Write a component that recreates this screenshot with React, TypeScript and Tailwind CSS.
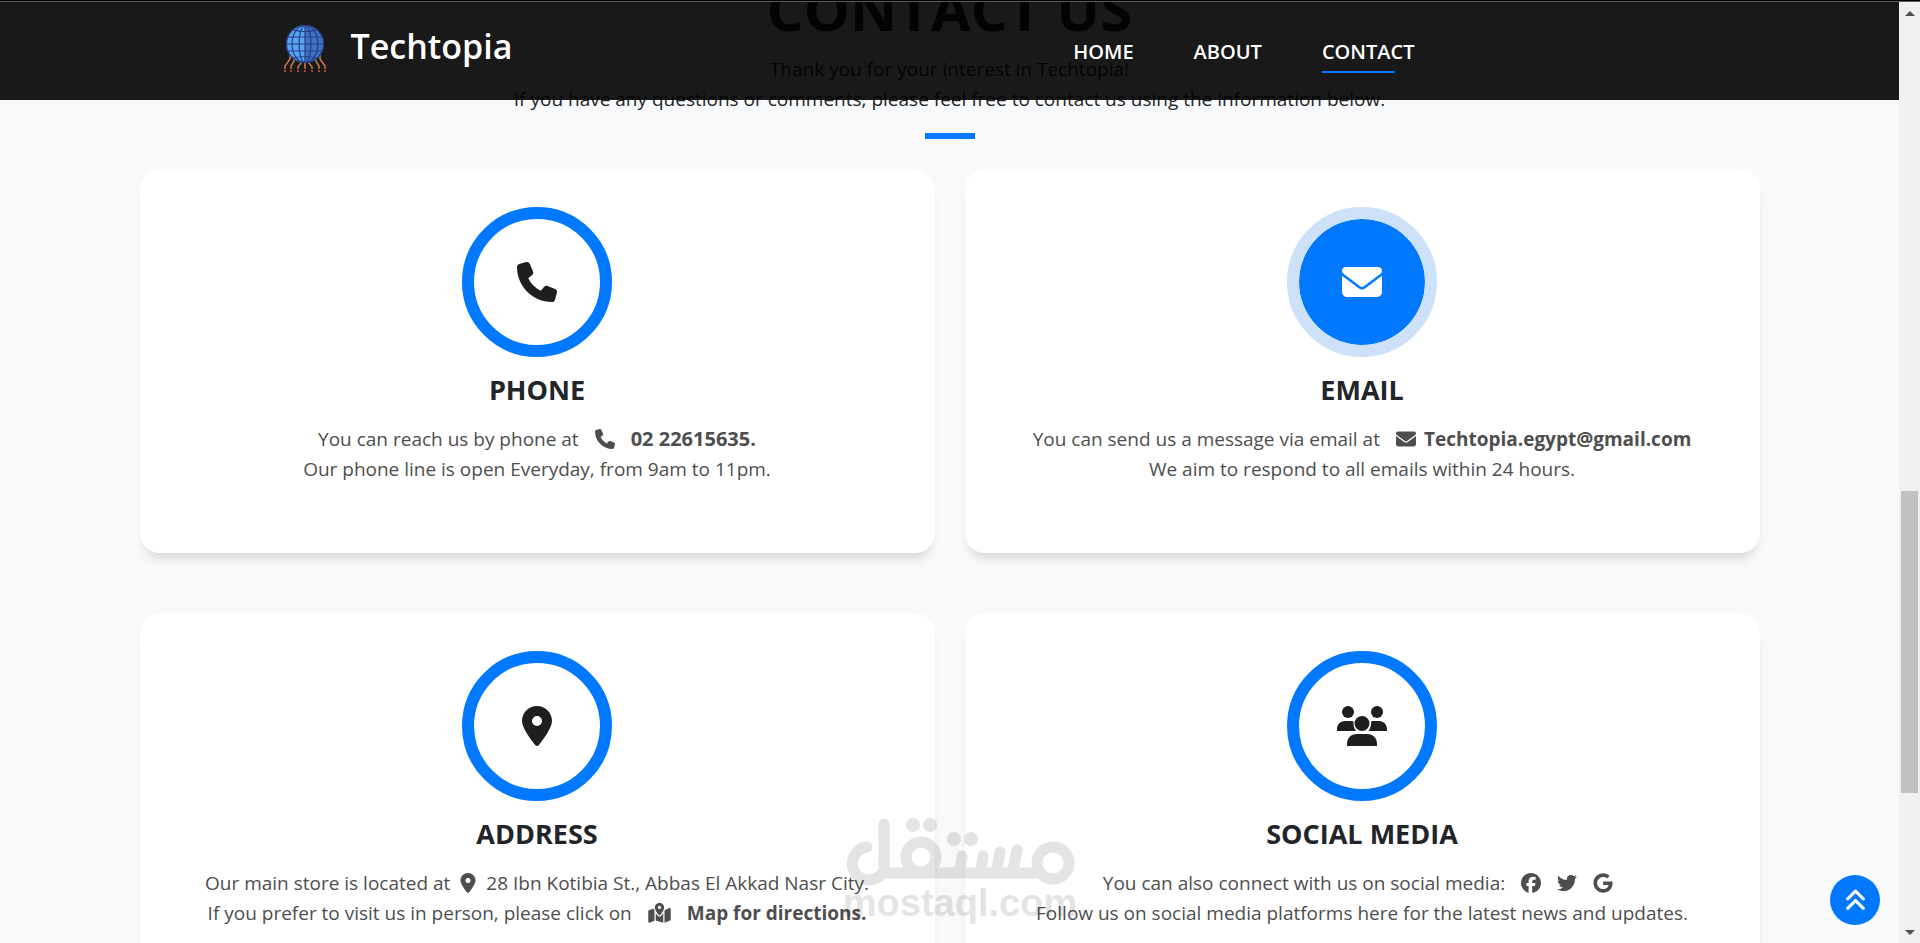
import type { ReactNode } from 'react'
import {
  FaPhone,
  FaEnvelope,
  FaLocationDot,
  FaMapLocationDot,
  FaFacebook,
  FaTwitter,
  FaGoogle,
  FaAnglesUp
} from 'react-icons/fa6'

interface ContactCard {
  title: string
  icon: ReactNode
  active?: boolean
  lines: ReactNode[]
}

const navLinks = [
  { label: 'HOME', href: '#home' },
  { label: 'ABOUT', href: '#about' },
  { label: 'CONTACT', href: '#contact', active: true }
]

const UsersIcon = () => (
  <svg viewBox="0 0 50 40" className="w-[50px] h-[40px]" fill="currentColor">
    <circle cx="11" cy="6" r="6" />
    <circle cx="40" cy="6" r="6" />
    <circle cx="25" cy="17.500" r="7.500" />
    <path d="M0 25v-2c0-4 3-8 8-8h6c1 0 2 .3 2.600 .6C16 19 17 22 19 25z" />
    <path d="M50 25v-2c0-4-3-8-8-8h-6c-1 0-1.500.3-1.900.6C34.500 19 33.500 22 31.500 25z" />
    <path d="M10 40v-2c0-6 4-10 10-10h10c6 0 10 4 10 10v2z" />
  </svg>
)

const cards: ContactCard[] = [
  {
    title: 'PHONE',
    icon: <FaPhone />,
    lines: [
      <>
        You can reach us by phone at
        <FaPhone className="inline size-5 mx-4 -mt-1" />
        <a href="tel:0222615635" className="font-bold text-[20px]">02 22615635.</a>
      </>,
      'Our phone line is open Everyday, from 9am to 11pm.'
    ]
  },
  {
    title: 'EMAIL',
    icon: <FaEnvelope />,
    active: true,
    lines: [
      <>
        You can send us a message via email at
        <FaEnvelope className="inline size-5 ml-4 mr-2 -mt-1" />
        <a href="mailto:Techtopia.egypt@gmail.com" className="font-bold">Techtopia.egypt@gmail.com</a>
      </>,
      'We aim to respond to all emails within 24 hours.'
    ]
  },
  {
    title: 'ADDRESS',
    icon: <FaLocationDot />,
    lines: [
      <>
        Our main store is located at
        <FaLocationDot className="inline size-5 mx-2 -mt-1" />
        28 Ibn Kotibia St., Abbas El Akkad Nasr City.
      </>,
      <>
        If you prefer to visit us in person, please click on
        <FaMapLocationDot className="inline w-[23px] h-5 mx-4 -mt-1" />
        <a href="#map" className="font-bold">Map for directions.</a>
      </>
    ]
  },
  {
    title: 'SOCIAL MEDIA',
    icon: <UsersIcon />,
    lines: [
      <>
        You can also connect with us on social media:
        <a href="#facebook" aria-label="Facebook" className="ml-4"><FaFacebook className="inline size-5 -mt-1" /></a>
        <a href="#twitter" aria-label="Twitter" className="ml-4"><FaTwitter className="inline size-5 -mt-1" /></a>
        <a href="#google" aria-label="Google" className="ml-4 mr-2"><FaGoogle className="inline size-5 -mt-1" /></a>
      </>,
      'Follow us on social media platforms here for the latest news and updates.'
    ]
  }
]

const Logo = () => (
  <svg viewBox="0 0 44 50" className="w-11 h-[50px]" fill="none">
    <defs>
      <linearGradient id="globe" x1="0" x2="1">
        <stop offset="0.500" stopColor="#56a6ee" />
        <stop offset="0.500" stopColor="#3f74bd" />
      </linearGradient>
    </defs>
    <g stroke="#c97a4a" strokeWidth="1.500">
      <path d="M7 30v5l-5 7v3M11 32v5l-3 5v3M18 36v3l-3 4v2M22 37v8M26 36v3l3 4v2M33 32v5l3 5v3M37 30v5l5 7v3" />
    </g>
    <path d="M2 46v2M8 46v2M15 46v2M22 46v2M29 46v2M36 46v2M42 46v2" stroke="#a8452f" strokeWidth="2" />
    <circle cx="22" cy="20" r="19" fill="url(#globe)" />
    <g stroke="#243c8c" strokeWidth="1.200">
      <circle cx="22" cy="20" r="18.500" />
      <ellipse cx="22" cy="20" rx="13" ry="18.500" />
      <ellipse cx="22" cy="20" rx="6" ry="18.500" />
      <path d="M22 1v38M3 20h38M5 13h34M5 27h34M10 6q12 3 24 0M10 34q12-3 24 0" />
    </g>
  </svg>
)

const Watermark = () => (
  <svg
    viewBox="0 0 230 108"
    className="w-[230px] h-[108px] opacity-10"
    aria-hidden="true"
  >
    <g fill="none" stroke="#000" strokeWidth="11" strokeLinecap="round" strokeLinejoin="round">
      <path d="M22 30a16.500 16.500 0 1 0 17 23V7v49h151" />
      <circle cx="76" cy="40" r="15" />
      <path d="M117 39l-2 14M138 39l-2 14M155 35l-3 18M172 33l-4 20" />
      <circle cx="208" cy="46" r="16" />
    </g>
    <g fill="#000">
      <circle cx="68" cy="8" r="7" />
      <circle cx="85" cy="8" r="7" />
      <circle cx="109" cy="22" r="7" />
      <circle cx="126" cy="22" r="7" />
    </g>
    <text x="115" y="99" textAnchor="middle" fontFamily="Liberation Sans, sans-serif" fontWeight="700" fontSize="38">
      mostaql.com
    </text>
  </svg>
)

export default function App() {
  return (
    <div className="relative h-screen overflow-hidden font-['Open_Sans',sans-serif] text-[#212529]">
      <div className="flex h-full">
        <div className="relative flex-1 overflow-hidden bg-[#f8f9fb]">
          {/* Header */}
          <header className="absolute inset-x-0 top-0 z-10 h-[100px] bg-black/90">
            <div className="flex justify-between max-w-[1350px] mx-auto pl-2 pr-[210px]">
              <a href="#home" className="flex items-start gap-6 pt-6 text-white">
                <Logo />
                <span className="text-[34px] leading-[44px] font-semibold">Techtopia</span>
              </a>
              <nav className="flex gap-[60px] pt-[38px]">
                {navLinks.map(link => (
                  <a key={link.label} href={link.href} className="text-white text-[20px] leading-[28px] font-semibold">
                    {link.label}
                    {link.active && <span className="block w-[73px] h-[2px] mt-[5px] bg-[#0078ff]" />}
                  </a>
                ))}
              </nav>
            </div>
          </header>

          {/* Contact section */}
          <main id="contact" className="max-w-[1620px] mx-auto">
            <div className="text-center text-[19px] leading-[30px]">
              <h1 className="-mt-[36px] text-[58px] leading-[90px] font-bold">CONTACT US</h1>
              <p>Thank you for your interest in Techtopia!</p>
              <p>If you have any questions or comments, please feel free to contact us using the information below.</p>
              <div className="w-[50px] h-[6px] mt-[19px] mx-auto bg-[#0078ff]" />
            </div>
            <div className="grid grid-cols-2 gap-x-[30px] gap-y-[60px] mt-[30px]">
              {cards.map(card => (
                <section
                  key={card.title}
                  className="h-[384px] pt-[38px] rounded-[20px] bg-white text-center shadow-[0_10px_10px_-4px_rgba(0,0,0,0.12)]"
                >
                  <div
                    className={
                      card.active
                        ? 'flex items-center justify-center size-[150px] mx-auto rounded-full border-[12px] border-[#cde1f8] bg-[#0078ff] bg-clip-padding text-white text-[40px]'
                        : 'flex items-center justify-center size-[150px] mx-auto rounded-full border-[12px] border-[#0078ff] text-[#1e1e1c] text-[40px]'
                    }
                  >
                    {card.icon}
                  </div>
                  <h2 className="mt-[15px] text-[27px] leading-[36px] font-bold">{card.title}</h2>
                  <div className="mt-4 text-[19px] leading-[30px] text-[#4e4e4e] whitespace-nowrap">
                    {card.lines.map((line, index) => (
                      <p key={index}>{line}</p>
                    ))}
                  </div>
                </section>
              ))}
            </div>
          </main>

          <button
            aria-label="Back to top"
            className="absolute right-[19px] bottom-[18px] flex items-center justify-center size-[50px] rounded-full bg-[#0078ff] text-white text-[25px]"
          >
            <FaAnglesUp />
          </button>
        </div>

        {/* Scrollbar */}
        <div className="flex flex-col items-center w-[21px] bg-[#f0f1f1]">
          <div className="mt-[11px] border-x-[5px] border-b-[5px] border-x-transparent border-b-[#505050]" />
          <div className="w-[17px] h-[302px] mt-[475px] bg-[#c1c1c1]" />
          <div className="mt-auto mb-2 border-x-[5px] border-t-[5px] border-x-transparent border-t-[#505050]" />
        </div>
      </div>

      {/* Window edge */}
      <div className="absolute inset-x-0 top-0 z-20 h-[2px] border-b border-[#5a5a5a] bg-black" />

      <div className="absolute inset-x-0 bottom-[18px] flex justify-center pointer-events-none">
        <Watermark />
      </div>
    </div>
  )
}
